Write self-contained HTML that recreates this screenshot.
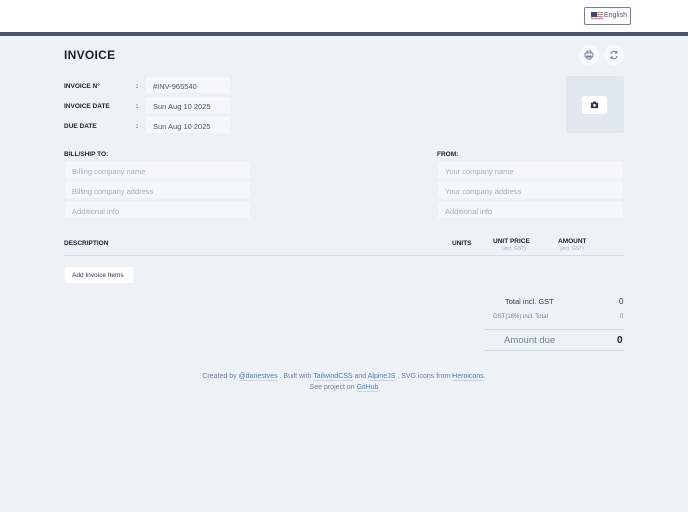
<!DOCTYPE html>
<html><head><style>
*{box-sizing:border-box;margin:0;padding:0}
body{width:688px;height:512px;background:#edf2f7;font-family:"Liberation Sans",sans-serif;position:relative;overflow:hidden;color:#2d3748}
.top{position:absolute;left:0;top:0;width:688px;height:32px;background:#fff}
.bar{position:absolute;left:0;top:32px;width:688px;height:4px;background:#4a5568}
.abs{position:absolute}
.lang{left:584px;top:7px;width:47px;height:18px;border:1px solid #718096;border-radius:2px;background:#fff;font-size:7px;color:#4a5568;padding:4px 0 0 19px}
.flag{position:absolute;left:6px;top:4px;width:12px;height:8px;background:repeating-linear-gradient(#c98a95 0 1px,#f0e8ea 1px 2px)}
.flag:before{content:"";position:absolute;left:0;top:0;width:6px;height:5px;background:#3c4a6a}
.lbl{font-size:6.5px;font-weight:bold;color:#1a202c}
.inp{background:#f5f8fb;height:16px;font-size:7.5px;color:#4a5568;padding:4.5px 7px 0}
.ph{color:#a0aec0}
.circ{width:20px;height:20px;border-radius:50%;background:#f7fafc}
.foot{font-size:7px;color:#718096;text-align:center}
.foot a{color:#4a7fb5;text-decoration:none;border-bottom:1px solid #c4d4e4}
</style></head><body>
<div class="top"></div><div class="bar"></div>
<div class="abs lang"><span class="flag"></span>English</div>
<div class="abs" style="left:64px;top:48px;font-size:12px;font-weight:bold;color:#1a202c;letter-spacing:.3px">INVOICE</div>
<div class="abs circ" style="left:579px;top:45px"></div>
<svg class="abs" style="left:584px;top:50px" width="10" height="10" viewBox="0 0 10 10" fill="none" stroke="#718096" stroke-width="1"><rect x="3" y="1" width="4" height="2"/><rect x="1" y="3" width="8" height="4" rx="1"/><rect x="3" y="6" width="4" height="3"/></svg>
<div class="abs circ" style="left:604px;top:45px"></div>
<svg class="abs" style="left:609px;top:50px" width="10" height="10" viewBox="0 0 10 10" fill="none" stroke="#718096" stroke-width="1"><path d="M2 4a3 3 0 0 1 5-2l1 1M8 6a3 3 0 0 1-5 2L2 7M8 1v2H6M2 9V7h2"/></svg>
<div class="abs lbl" style="left:64px;top:83px">INVOICE N°</div>
<div class="abs lbl" style="left:64px;top:103px">INVOICE DATE</div>
<div class="abs lbl" style="left:64px;top:123px">DUE DATE</div>
<div class="abs lbl" style="left:136px;top:83px">:</div>
<div class="abs lbl" style="left:136px;top:103px">:</div>
<div class="abs lbl" style="left:136px;top:123px">:</div>
<div class="abs inp" style="left:146px;top:77px;width:84px">#INV-965540</div>
<div class="abs inp" style="left:146px;top:97px;width:84px">Sun Aug 10 2025</div>
<div class="abs inp" style="left:146px;top:117px;width:84px">Sun Aug 10 2025</div>
<div class="abs" style="left:566px;top:76px;width:58px;height:57px;background:#e2e8f0;border-radius:3px"></div>
<div class="abs" style="left:582px;top:96px;width:25px;height:18px;background:#fff;border-radius:3px"></div>
<svg class="abs" style="left:590px;top:100px" width="9" height="9" viewBox="0 0 10 10"><path d="M1 3h2l1-1.5h2L7 3h2v6H1z" fill="#2d3748"/><circle cx="5" cy="6" r="1.5" fill="#fff"/></svg>
<div class="abs lbl" style="left:64px;top:151px">BILL/SHIP TO:</div>
<div class="abs lbl" style="left:437px;top:151px">FROM:</div>
<div class="abs inp ph" style="left:65px;top:162px;width:185px">Billing company name</div>
<div class="abs inp ph" style="left:65px;top:182px;width:185px">Billing company address</div>
<div class="abs inp ph" style="left:65px;top:202px;width:185px">Additional info</div>
<div class="abs inp ph" style="left:438px;top:162px;width:185px">Your company name</div>
<div class="abs inp ph" style="left:438px;top:182px;width:185px">Your company address</div>
<div class="abs inp ph" style="left:438px;top:202px;width:185px">Additional info</div>
<div class="abs lbl" style="left:64px;top:240px">DESCRIPTION</div>
<div class="abs lbl" style="left:452px;top:240px">UNITS</div>
<div class="abs lbl" style="left:493px;top:238px">UNIT PRICE</div>
<div class="abs lbl" style="left:558px;top:238px">AMOUNT</div>
<div class="abs" style="left:502px;top:246px;font-size:5px;color:#a0aec0">(incl. GST)</div>
<div class="abs" style="left:560px;top:246px;font-size:5px;color:#a0aec0">(incl. GST)</div>
<div class="abs" style="left:64px;top:255px;width:560px;height:1px;background:#d5dde6"></div>
<div class="abs" style="left:65px;top:267px;width:68px;height:16px;background:#fff;border-radius:2px;font-size:6.5px;color:#2d3748;padding:4.5px 0 0 7px">Add Invoice Items</div>
<div class="abs" style="left:505px;top:297px;font-size:7.5px;color:#2d3748">Total incl. GST</div>
<div class="abs" style="left:619px;top:297px;font-size:8px;color:#2d3748">0</div>
<div class="abs" style="left:493px;top:314px;font-size:6px;color:#718096">GST(18%) incl. Total</div>
<div class="abs" style="left:620px;top:314px;font-size:6px;color:#718096">0</div>
<div class="abs" style="left:484px;top:329px;width:140px;height:1px;background:#d5dde6"></div>
<div class="abs" style="left:504px;top:335px;font-size:9.5px;color:#718096">Amount due</div>
<div class="abs" style="left:617px;top:335px;font-size:10px;font-weight:bold;color:#1a202c">0</div>
<div class="abs" style="left:484px;top:350px;width:140px;height:1px;background:#d5dde6"></div>
<div class="abs foot" style="left:0;top:373px;width:688px">Created by <a>@danestves</a> . Built with <a>TailwindCSS</a> and <a>AlpineJS</a> . SVG icons from <a>Heroicons</a>.</div>
<div class="abs foot" style="left:0;top:384px;width:688px">See project on <a>GitHub</a></div>
</body></html>
